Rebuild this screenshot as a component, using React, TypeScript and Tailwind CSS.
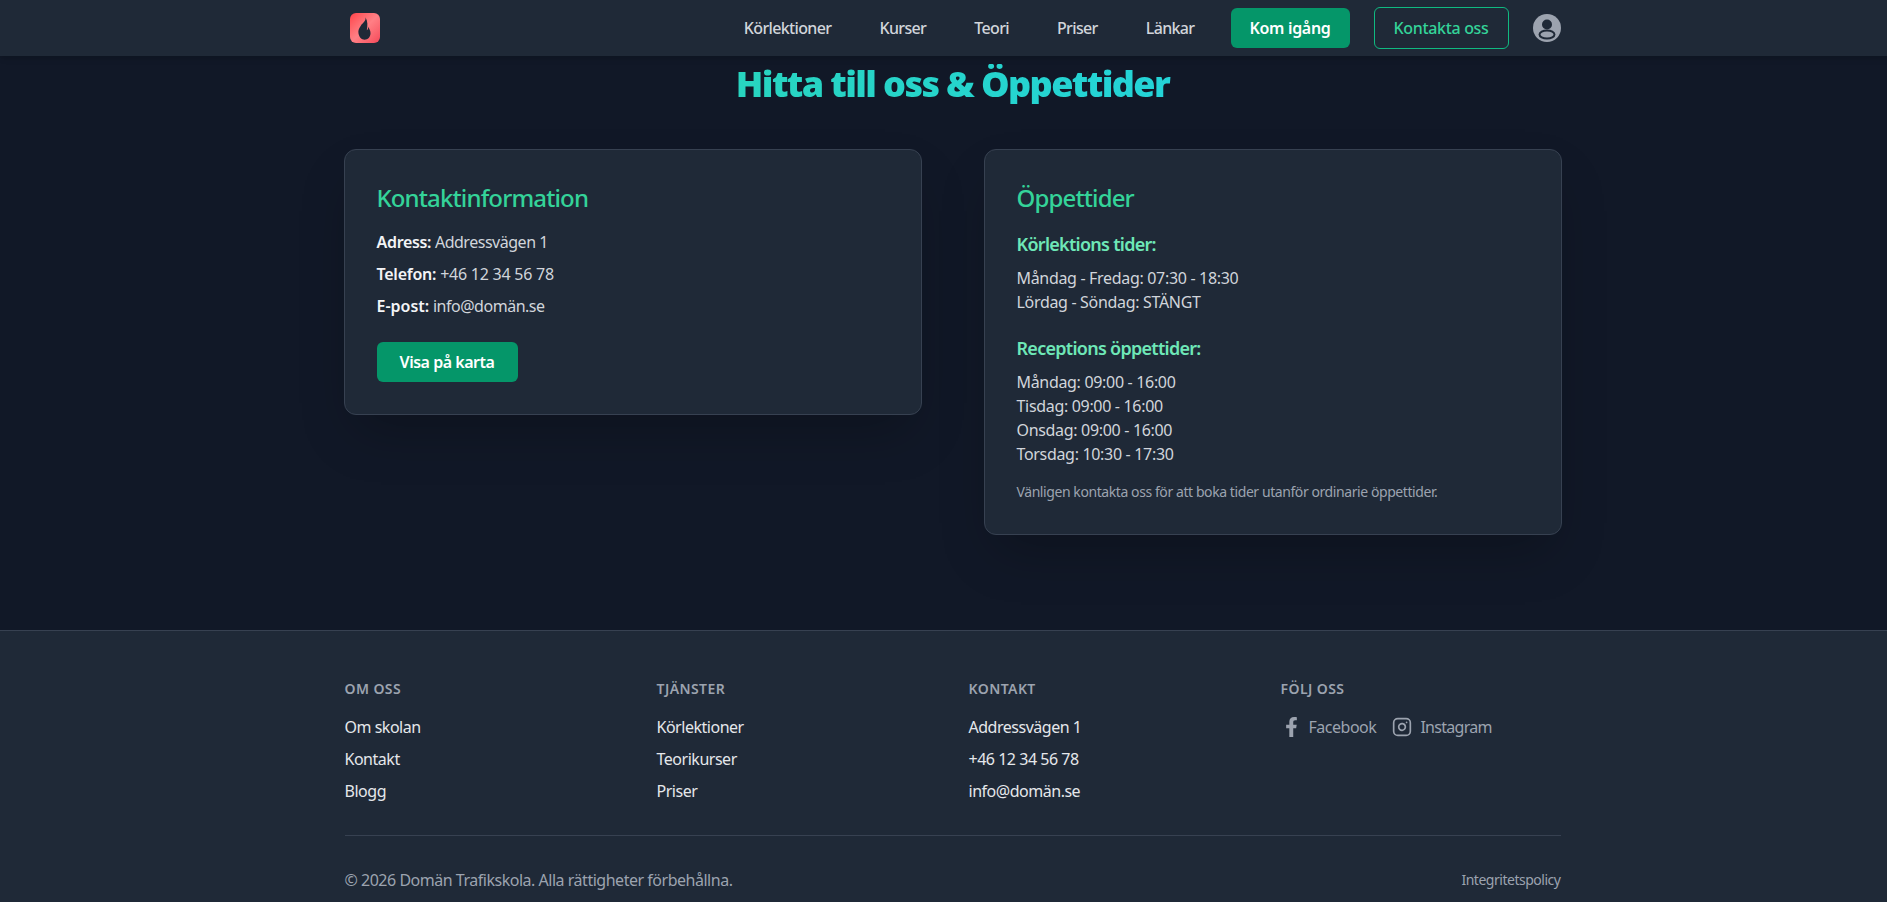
import { FaFacebookF } from 'react-icons/fa'
import { Instagram } from 'lucide-react'

const navLinks = ['Körlektioner', 'Kurser', 'Teori', 'Priser', 'Länkar']

const footerCols = [
  { title: 'Om oss', links: ['Om skolan', 'Kontakt', 'Blogg'] },
  { title: 'Tjänster', links: ['Körlektioner', 'Teorikurser', 'Priser'] },
  { title: 'Kontakt', links: ['Addressvägen 1', '+46 12 34 56 78', 'info@domän.se'] },
]

const Logo = () => (
  <div className="ml-[5px] flex h-[30px] w-[30px] items-center justify-center rounded-md bg-gradient-to-br from-[#ff3f49] via-[#ff7f85] to-[#f5475a]">
    <svg viewBox="0 0 14 24" className="h-[23px] w-[13px]" fill="#1f2937">
      <path d="M8 0C9 4 5 6 3 9 1 12 0 14 .5 17 1 21 4 24 7 24c3.500 0 6.500-3 6.500-7 0-3-1.500-5-2.500-7 0 2-.5 3-1.500 4C10.500 9 10.500 4 8 0Z" />
    </svg>
  </div>
)

const UserIcon = () => (
  <svg viewBox="0 0 28 28" className="ml-6 h-7 w-7">
    <circle cx="14" cy="14" r="14" fill="#9ca3af" />
    <circle cx="14" cy="10.500" r="5" fill="#1f2937" />
    <ellipse cx="14" cy="20.500" rx="7.500" ry="4" fill="#9ca3af" stroke="#1f2937" strokeWidth="2" />
  </svg>
)

const App = () => {
  return (
    <div className="h-screen overflow-hidden bg-[#111827] font-['Noto_Sans','Open_Sans',sans-serif] tracking-[-0.03em]">
      <div className="w-[1905px]">
        {/* Header */}
        <header className="h-14 bg-[#1f2937] shadow-md">
          <div className="mx-auto flex h-14 w-[1216px] items-center justify-between">
            <Logo />
            <nav className="flex items-center">
              <div className="mr-[36px] flex items-center gap-12 tracking-[-0.04em]">
                {navLinks.map((l) => (
                  <a key={l} className="font-medium text-[#d1d5db]">{l}</a>
                ))}
              </div>
              <a className="flex h-10 w-[119px] items-center justify-center rounded-md bg-[#059669] font-semibold tracking-[-0.02em] text-white">Kom igång</a>
              <a className="ml-6 flex h-[42px] w-[135px] items-center justify-center rounded-md border border-[#10b981] font-medium tracking-[-0.02em] text-[#34d399]">Kontakta oss</a>
              <UserIcon />
            </nav>
          </div>
        </header>

        {/* Main */}
        <main className="h-[574px] pt-2">
          <div className="mx-auto w-[1218px]">
            <h1 className="mb-[45px] bg-gradient-to-r from-[#2dd4a8] to-[#22d3ee] bg-clip-text text-center text-4xl font-black tracking-[-0.045em] text-transparent">
              Hitta till oss &amp; Öppettider
            </h1>
            <div className="grid grid-cols-2 items-start gap-[62px]">
              <section className="rounded-xl border border-[#374151] bg-[#1f2937] p-8 shadow-2xl">
                <h2 className="mb-4 text-2xl font-medium tracking-[-0.036em] text-[#34d399]">Kontaktinformation</h2>
                <p className="mb-2 text-[#d1d5db]"><strong className="font-semibold tracking-[-0.02em] text-[#f3f4f6]">Adress:</strong> Addressvägen 1</p>
                <p className="mb-2 tracking-[-0.015em] text-[#d1d5db]"><strong className="font-semibold text-[#f3f4f6]">Telefon:</strong> +46 12 34 56 78</p>
                <p className="mb-2 text-[#d1d5db]"><strong className="font-semibold tracking-[0em] text-[#f3f4f6]">E-post:</strong> info@domän.se</p>
                <a className="mt-6 flex h-10 w-[141px] items-center justify-center rounded-md bg-[#059669] font-semibold text-white">Visa på karta</a>
              </section>

              <section className="rounded-xl border border-[#374151] bg-[#1f2937] p-8 shadow-2xl">
                <h2 className="mb-4 text-2xl font-medium tracking-[-0.036em] text-[#34d399]">Öppettider</h2>
                <h3 className="mb-2 text-lg font-semibold tracking-[-0.04em] text-[#6ee7b7]">Körlektions tider:</h3>
                <div className="tracking-[-0.02em] text-[#d1d5db]">
                  <p>Måndag - Fredag: 07:30 - 18:30</p>
                  <p>Lördag - Söndag: STÄNGT</p>
                </div>
                <h3 className="mt-5 mb-2 text-lg font-semibold tracking-[-0.04em] text-[#6ee7b7]">Receptions öppettider:</h3>
                <div className="tracking-[-0.02em] text-[#d1d5db]">
                  <p>Måndag: 09:00 - 16:00</p>
                  <p>Tisdag: 09:00 - 16:00</p>
                  <p>Onsdag: 09:00 - 16:00</p>
                  <p>Torsdag: 10:30 - 17:30</p>
                </div>
                <p className="mt-4 text-sm tracking-[-0.03em] text-[#9ca3af]">Vänligen kontakta oss för att boka tider utanför ordinarie öppettider.</p>
              </section>
            </div>
          </div>
        </main>

        {/* Footer */}
        <footer className="border-t border-[#374151] bg-[#1f2937] pt-12 pb-12">
          <div className="mx-auto w-[1216px]">
            <div className="grid grid-cols-4 gap-8">
              {footerCols.map((col) => (
                <div key={col.title}>
                  <h4 className="mb-4 text-sm font-semibold uppercase tracking-[0.03em] text-[#9ca3af]">{col.title}</h4>
                  <ul className="space-y-2">
                    {col.links.map((l) => (
                      <li key={l} className="text-[#e5e7eb]">{l}</li>
                    ))}
                  </ul>
                </div>
              ))}
              <div>
                <h4 className="mb-4 text-sm font-semibold uppercase tracking-[0.03em] text-[#9ca3af]">Följ oss</h4>
                <div className="flex items-center gap-4 text-[#9ca3af]">
                  <a className="flex items-center gap-[11px]">
                    <FaFacebookF className="ml-1 h-5 w-[13px]" />
                    Facebook
                  </a>
                  <a className="flex items-center gap-2 tracking-[-0.045em]">
                    <Instagram className="h-5 w-5" />
                    Instagram
                  </a>
                </div>
              </div>
            </div>
            <div className="mt-8 flex items-center justify-between border-t border-[#374151] pt-8 text-[#9ca3af]">
              <p>© 2026 Domän Trafikskola. Alla rättigheter förbehållna.</p>
              <a className="text-sm">Integritetspolicy</a>
            </div>
          </div>
        </footer>
      </div>
    </div>
  )
}

export default App
